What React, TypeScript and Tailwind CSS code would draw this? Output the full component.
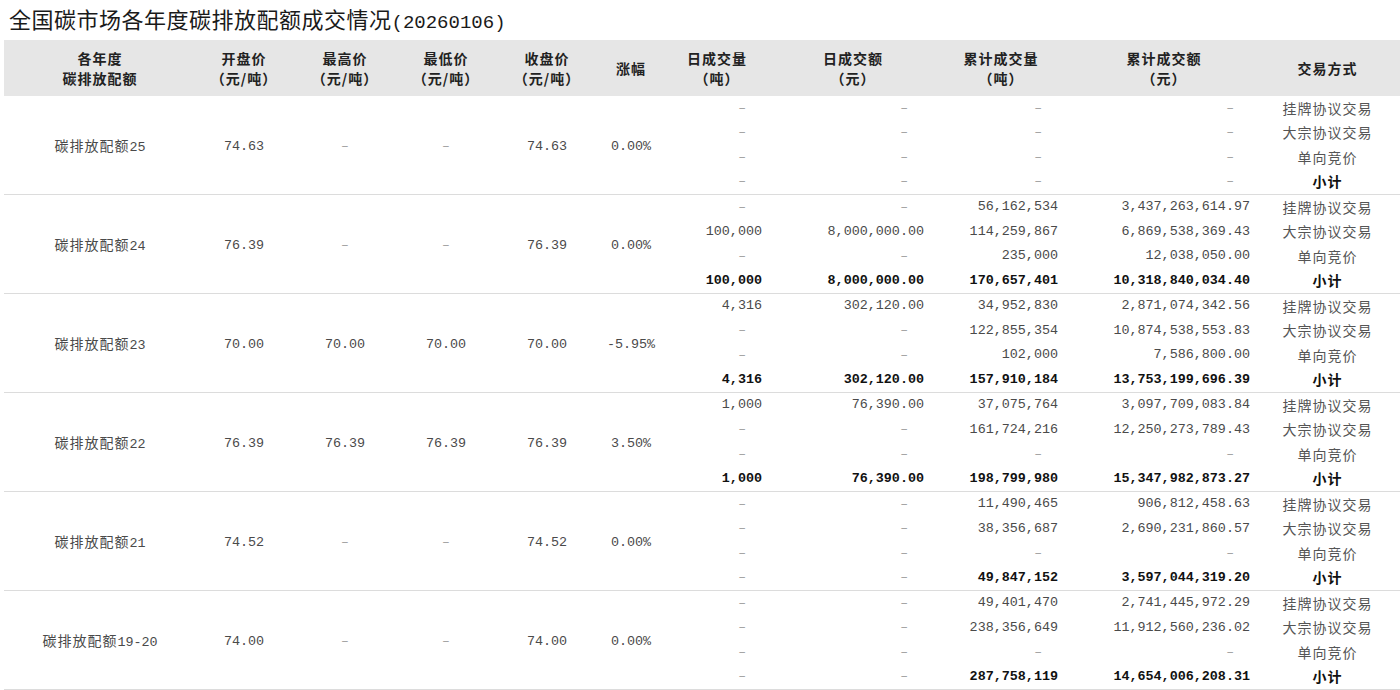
const cols =
  'grid grid-cols-[192px_96px_106px_96px_106px_62px_110px_162px_134px_192px_135px]';

const cjk = "font-['Noto_Sans_CJK_SC',sans-serif] text-[14px] tracking-[1px]";
const mono = "font-['Liberation_Mono','DejaVu_Sans_Mono',monospace]";

type Group = {
  year: string;
  prices: string[]; // open, high, low, close, change
  rows: string[][]; // 4 rows x 4 numbers (last row = subtotal)
};

const methods = ['挂牌协议交易', '大宗协议交易', '单向竞价', '小计'];

const groups: Group[] = [
  {
    year: '25',
    prices: ['74.63', '-', '-', '74.63', '0.00%'],
    rows: [
      ['-', '-', '-', '-'],
      ['-', '-', '-', '-'],
      ['-', '-', '-', '-'],
      ['-', '-', '-', '-'],
    ],
  },
  {
    year: '24',
    prices: ['76.39', '-', '-', '76.39', '0.00%'],
    rows: [
      ['-', '-', '56,162,534', '3,437,263,614.97'],
      ['100,000', '8,000,000.00', '114,259,867', '6,869,538,369.43'],
      ['-', '-', '235,000', '12,038,050.00'],
      ['100,000', '8,000,000.00', '170,657,401', '10,318,840,034.40'],
    ],
  },
  {
    year: '23',
    prices: ['70.00', '70.00', '70.00', '70.00', '-5.95%'],
    rows: [
      ['4,316', '302,120.00', '34,952,830', '2,871,074,342.56'],
      ['-', '-', '122,855,354', '10,874,538,553.83'],
      ['-', '-', '102,000', '7,586,800.00'],
      ['4,316', '302,120.00', '157,910,184', '13,753,199,696.39'],
    ],
  },
  {
    year: '22',
    prices: ['76.39', '76.39', '76.39', '76.39', '3.50%'],
    rows: [
      ['1,000', '76,390.00', '37,075,764', '3,097,709,083.84'],
      ['-', '-', '161,724,216', '12,250,273,789.43'],
      ['-', '-', '-', '-'],
      ['1,000', '76,390.00', '198,799,980', '15,347,982,873.27'],
    ],
  },
  {
    year: '21',
    prices: ['74.52', '-', '-', '74.52', '0.00%'],
    rows: [
      ['-', '-', '11,490,465', '906,812,458.63'],
      ['-', '-', '38,356,687', '2,690,231,860.57'],
      ['-', '-', '-', '-'],
      ['-', '-', '49,847,152', '3,597,044,319.20'],
    ],
  },
  {
    year: '19-20',
    prices: ['74.00', '-', '-', '74.00', '0.00%'],
    rows: [
      ['-', '-', '49,401,470', '2,741,445,972.29'],
      ['-', '-', '238,356,649', '11,912,560,236.02'],
      ['-', '-', '-', '-'],
      ['-', '-', '287,758,119', '14,654,006,208.31'],
    ],
  },
];

const headers: [string, string?][] = [
  ['各年度', '碳排放配额'],
  ['开盘价', '（元/吨）'],
  ['最高价', '（元/吨）'],
  ['最低价', '（元/吨）'],
  ['收盘价', '（元/吨）'],
  ['涨幅'],
  ['日成交量', '（吨）'],
  ['日成交额', '（元）'],
  ['累计成交量', '（吨）'],
  ['累计成交额', '（元）'],
  ['交易方式'],
];

function Dash() {
  return <span className={`${mono} text-[13px] text-[#a0a0a0]`}>–</span>;
}

function NumCell({ value, bold }: { value: string; bold: boolean }) {
  if (value === '-') {
    return (
      <div className="flex items-center justify-end pr-[26px]">
        <Dash />
      </div>
    );
  }
  return (
    <div
      className={`flex items-center justify-end pr-[10px] ${mono} text-[13.4px] ${
        bold ? 'font-bold text-[#111]' : 'text-[#4a4a4a]'
      }`}
    >
      {value}
    </div>
  );
}

function GroupBlock({ g }: { g: Group }) {
  return (
    <div className={`${cols} grid-rows-[repeat(4,24.5px)] border-b border-[#dcdcdc]`}>
      <div className="row-span-4 flex items-center justify-center pt-[2px] text-[#4a4a4a]">
        <span className="leading-[20px]">
          <span className={cjk}>碳排放配额</span>
          <span className={`${mono} text-[13.4px]`}>{g.year}</span>
        </span>
      </div>
      {g.prices.map((p, i) => (
        <div key={i} className="row-span-4 flex items-center justify-center pt-[4px]">
          {p === '-' ? (
            <Dash />
          ) : (
            <span className={`${mono} text-[13.4px] text-[#4a4a4a]`}>{p}</span>
          )}
        </div>
      ))}
      {g.rows.map((r, ri) => (
        <div key={ri} className="contents">
          {r.map((v, ci) => (
            <NumCell key={ci} value={v} bold={ri === 3} />
          ))}
          <div
            className={`flex items-center justify-center ${cjk} ${
              ri === 3 ? 'font-bold text-[#111]' : 'text-[#555]'
            }`}
          >
            {methods[ri]}
          </div>
        </div>
      ))}
    </div>
  );
}

export default function App() {
  return (
    <div className="w-[1400px] h-[690px] overflow-hidden bg-white">
      <div className="h-10 flex items-center pl-[9px] text-[#1a1a1a]">
        <span className="leading-[28px]">
          <span className="font-['Noto_Sans_CJK_SC',sans-serif] text-[22px] tracking-[0.5px]">
            全国碳市场各年度碳排放配额成交情况
          </span>
          <span className="font-['Liberation_Mono',monospace] text-[19px]">(20260106)</span>
        </span>
      </div>
      <div className="pl-1">
        <div className={`${cols} h-[56px] items-center bg-[#e6e6e6]`}>
          {headers.map(([a, b], i) => (
            <div
              key={i}
              className={`flex flex-col items-center justify-center ${cjk} font-bold leading-[20px] text-[#222]`}
            >
              <span>{a}</span>
              {b && <span>{b}</span>}
            </div>
          ))}
        </div>
        {groups.map((g) => (
          <GroupBlock key={g.year} g={g} />
        ))}
      </div>
    </div>
  );
}
